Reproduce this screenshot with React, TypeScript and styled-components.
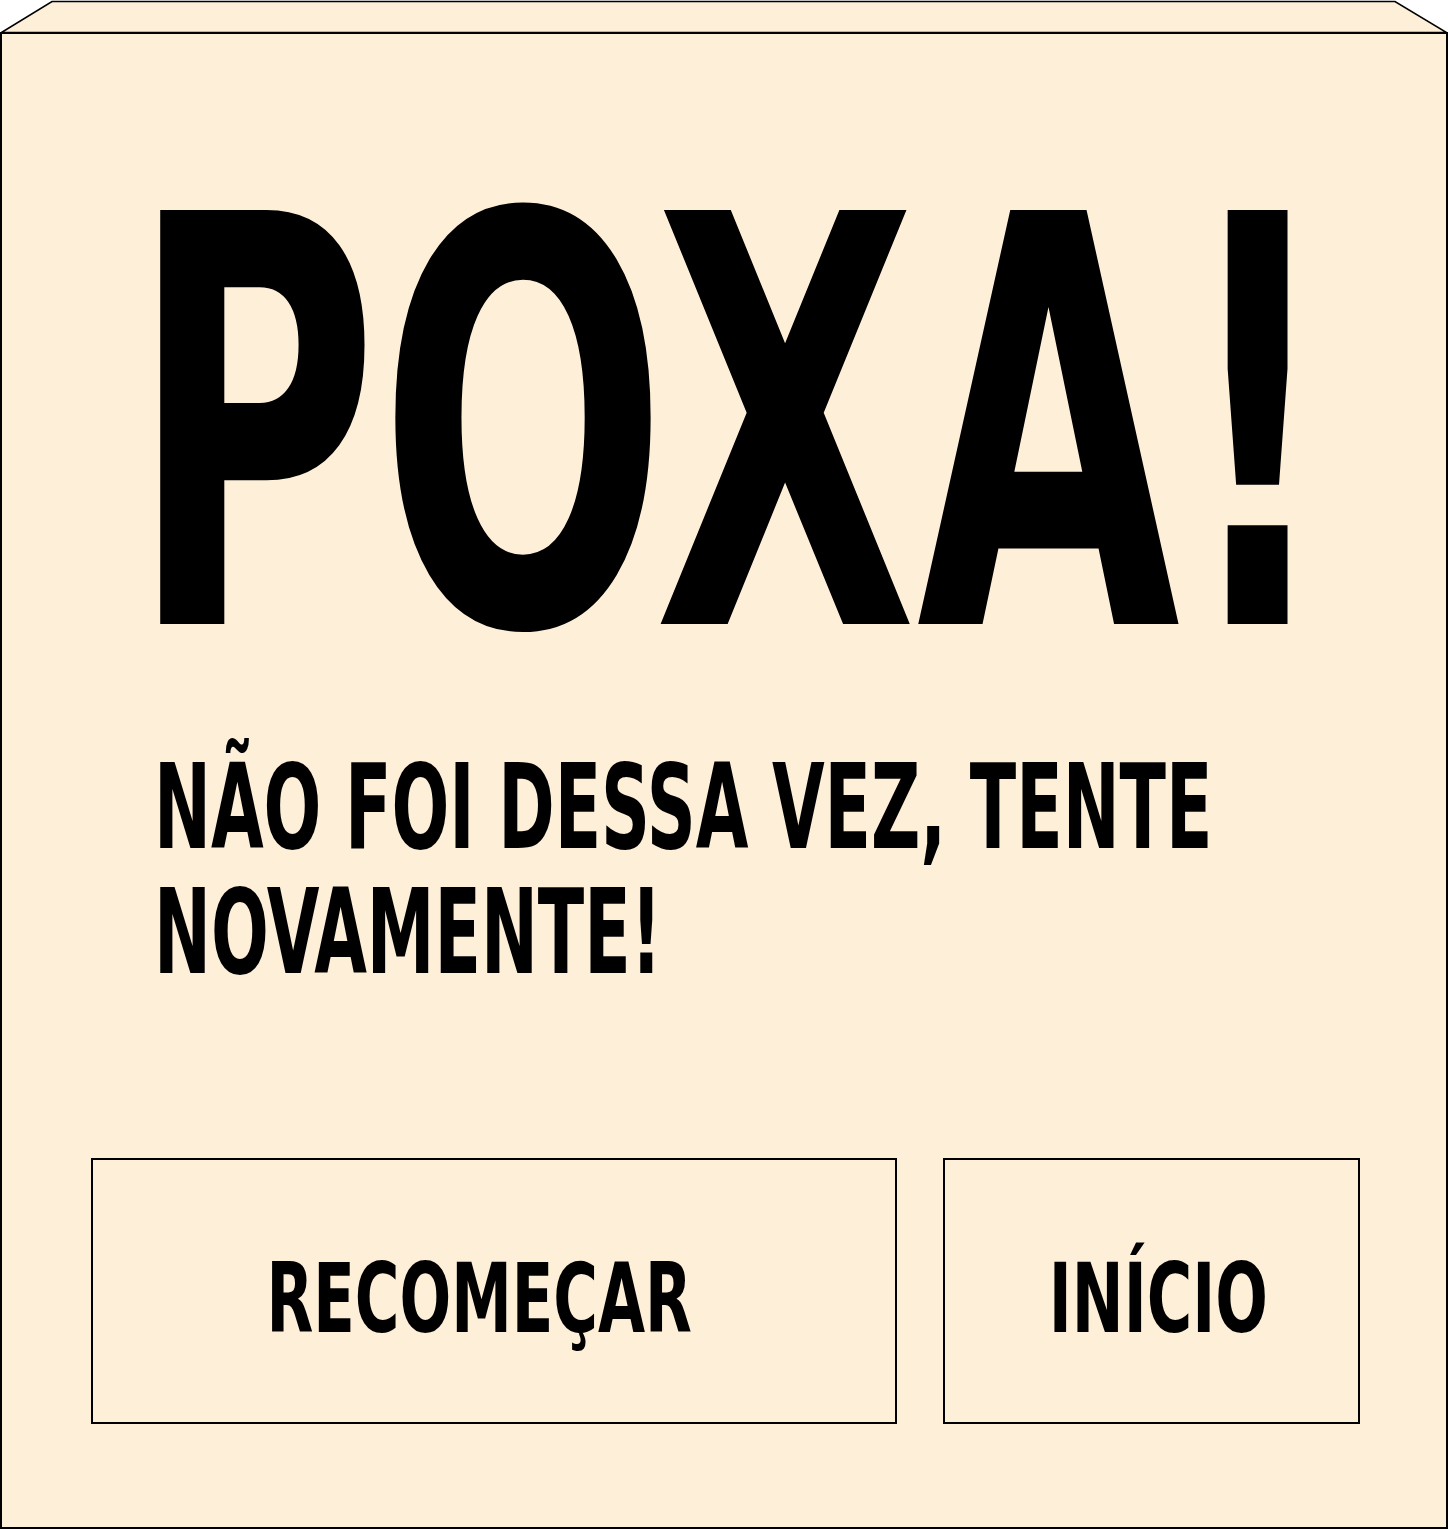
import React from 'react';
import styled, { createGlobalStyle } from 'styled-components';

const Global = createGlobalStyle`
  html, body { margin: 0; padding: 0; background: #ffffff; overflow-x: hidden; }
  body { font-family: "DejaVu Sans Condensed", "DejaVu Sans", sans-serif; }
`;

const Page = styled.div`
  width: 1448px;
  overflow: hidden;
`;

const Lid = styled.svg`
  display: block;
  width: 1448px;
  height: 33px;
  margin-bottom: -1px;
`;

const Frame = styled.section`
  box-sizing: border-box;
  width: 1448px;
  height: 1497px;
  background: #feefd8;
  border: 2px solid #000;
  padding-top: 110px;
  display: flex;
  flex-direction: column;
  overflow: hidden;
`;

const Squeeze = styled.span<{ $k: number; $origin?: string }>`
  display: inline-block;
  transform: scaleX(${(p) => p.$k});
  transform-origin: ${(p) => p.$origin ?? 'left center'};
`;

const Title = styled.h1`
  margin: 0 0 0 127px;
  font-size: 568px;
  line-height: 568px;
  font-weight: 700;
  font-stretch: condensed;
  color: #000;
  white-space: nowrap;
`;

const Message = styled.p`
  margin: 33px 0 0 152px;
  font-size: 117px;
  line-height: 125px;
  font-weight: 700;
  font-stretch: condensed;
  color: #000;
  white-space: nowrap;
`;

const Actions = styled.div`
  display: flex;
  gap: 46px;
  margin: 163px 0 0 89px;
`;

const Action = styled.button<{ $w: number; $shift: number }>`
  box-sizing: border-box;
  width: ${(p) => p.$w}px;
  height: 266px;
  padding: 14px ${(p) => (p.$shift < 0 ? -2 * p.$shift : 0)}px 0
    ${(p) => (p.$shift > 0 ? 2 * p.$shift : 0)}px;
  background: transparent;
  border: 2px solid #000;
  display: flex;
  align-items: center;
  justify-content: center;
  font-family: inherit;
  font-size: 97px;
  line-height: 1;
  font-weight: 700;
  font-stretch: condensed;
  color: #000;
  white-space: nowrap;
  cursor: pointer;
  overflow: hidden;
`;

export default function App() {
  return (
    <>
      <Global />
      <Page>
        <Lid viewBox="0 0 1448 33">
          <polygon
            points="1.5,32.5 52,1.5 1395,1.5 1446.5,32.5"
            fill="#feefd8"
            stroke="#000"
            strokeWidth="1.6"
          />
        </Lid>
        <Frame>
          <Title>
            <Squeeze $k={0.666}>POXA!</Squeeze>
          </Title>
          <Message>
            <Squeeze $k={0.646}>
              NÃO FOI DESSA VEZ, TENTE
              <br />
              NOVAMENTE!
            </Squeeze>
          </Message>
          <Actions>
            <Action $w={806} $shift={-15}>
              <Squeeze $k={0.697} $origin="center">RECOMEÇAR</Squeeze>
            </Action>
            <Action $w={417} $shift={7}>
              <Squeeze $k={0.71} $origin="center">INÍCIO</Squeeze>
            </Action>
          </Actions>
        </Frame>
      </Page>
    </>
  );
}
